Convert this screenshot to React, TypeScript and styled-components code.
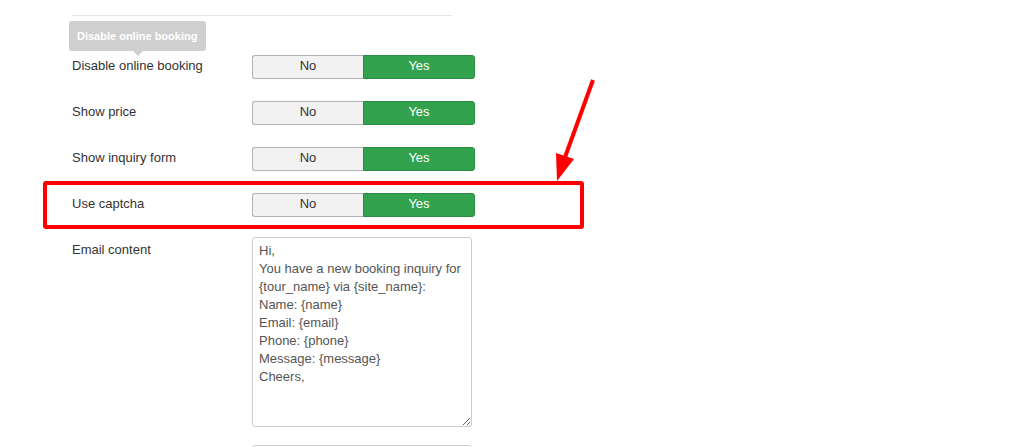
import React from 'react';
import styled, { createGlobalStyle } from 'styled-components';

const GlobalStyle = createGlobalStyle`
	html, body {
		margin: 0;
		padding: 0;
		background: #fff;
	}
	body {
		font-family: "Liberation Sans", Helvetica, Arial, sans-serif;
		font-size: 13px;
		color: #333;
	}
`;

interface ToggleRow {
	label: string;
	value: boolean;
	tooltip?: string;
	highlight?: boolean;
}

const rows: ToggleRow[] = [
	{ label: 'Disable online booking', value: true, tooltip: 'Disable online booking' },
	{ label: 'Show price', value: true },
	{ label: 'Show inquiry form', value: true },
	{ label: 'Use captcha', value: true, highlight: true },
];

const emailText = `Hi,
You have a new booking inquiry for {tour_name} via {site_name}:
Name: {name}
Email: {email}
Phone: {phone}
Message: {message}
Cheers,`;

const App: React.FC = () => {
	return (
		<Page>
			<GlobalStyle />
			<Divider />
			<Form>
				{rows.map((r) => (
					<Row key={r.label} highlight={r.highlight}>
						<Label>
							{r.tooltip && <Tooltip>{r.tooltip}</Tooltip>}
							{r.label}
						</Label>
						<Switch>
							<Option active={!r.value} tone='off'>No</Option>
							<Option active={r.value} tone='on'>Yes</Option>
						</Switch>
					</Row>
				))}
				<Row>
					<Label>Email content</Label>
					<TextArea defaultValue={emailText} />
				</Row>
				<Row>
					<Label />
					<Input />
				</Row>
			</Form>
			{/* annotation arrow pointing at the captcha row */}
			<Arrow width='60' height='120' viewBox='540 70 60 120'>
				<line x1='593' y1='80' x2='564' y2='160' stroke='#ff0000' strokeWidth='4' />
				<polygon points='557,181 574,159 556,153' fill='#ff0000' />
			</Arrow>
		</Page>
	);
};

export default App;

const Page = styled.div`
	position: relative;
	width: 1020px;
	height: 447px;
	overflow: hidden;
	padding-left: 72px;
	padding-top: 15px;
	box-sizing: border-box;
`;

const Divider = styled.div`
	width: 380px;
	border-top: 1px solid #e6e6e6;
	margin-bottom: 37px;
`;

const Form = styled.div`
	display: flex;
	flex-direction: column;
`;

const Row = styled.div<{ highlight?: boolean }>`
	position: relative;
	display: flex;
	align-items: flex-start;
	margin-bottom: 18px;
	${({ highlight }) =>
		highlight &&
		`
		&::before {
			content: '';
			position: absolute;
			left: -29px;
			top: -10px;
			width: 541px;
			height: 48px;
			border: 4px solid #ff0000;
			border-radius: 3px;
			box-sizing: border-box;
			pointer-events: none;
		}
	`}
`;

const Label = styled.div`
	position: relative;
	width: 180px;
	flex-shrink: 0;
	line-height: 24px;
	margin-top: 1px;
`;

const Tooltip = styled.div`
	position: absolute;
	left: -3px;
	bottom: calc(100% + 3px);
	white-space: nowrap;
	background: #cfcfcf;
	color: #fff;
	font-weight: bold;
	font-size: 11px;
	line-height: 14px;
	padding: 8px 9px 8px 8px;
	border-radius: 3px;
	&::after {
		content: '';
		position: absolute;
		left: 50%;
		top: 100%;
		margin-left: -5px;
		border-left: 5px solid transparent;
		border-right: 5px solid transparent;
		border-top: 5px solid #cfcfcf;
	}
`;

const Switch = styled.div`
	display: flex;
	margin: 2px 0;
	height: 24px;
`;

const Option = styled.div<{ active: boolean; tone: 'on' | 'off' }>`
	width: 111px;
	box-sizing: border-box;
	display: flex;
	align-items: center;
	justify-content: center;
	padding-bottom: 3px;
	font-size: 13px;
	border: 1px solid ${({ active, tone }) => (active && tone === 'on' ? '#2a8a41' : '#b3b3b3')};
	background: ${({ active, tone }) => (active && tone === 'on' ? '#33a24e' : '#f2f2f2')};
	color: ${({ active, tone }) => (active && tone === 'on' ? '#fff' : '#333')};
	&:first-child {
		border-radius: 3px 0 0 3px;
		border-right: none;
	}
	&:last-child {
		width: 112px;
		border-radius: 0 3px 3px 0;
	}
`;

const TextArea = styled.textarea`
	width: 220px;
	height: 190px;
	box-sizing: border-box;
	border: 1px solid #cccccc;
	border-radius: 3px;
	padding: 4px 6px;
	font-family: "Liberation Sans", Helvetica, Arial, sans-serif;
	font-size: 13px;
	line-height: 18px;
	color: #555;
	resize: vertical;
	outline: none;
`;

const Input = styled.div`
	width: 220px;
	height: 30px;
	box-sizing: border-box;
	border: 1px solid #cccccc;
	border-radius: 3px;
`;

const Arrow = styled.svg`
	position: absolute;
	left: 540px;
	top: 70px;
	overflow: visible;
`;
